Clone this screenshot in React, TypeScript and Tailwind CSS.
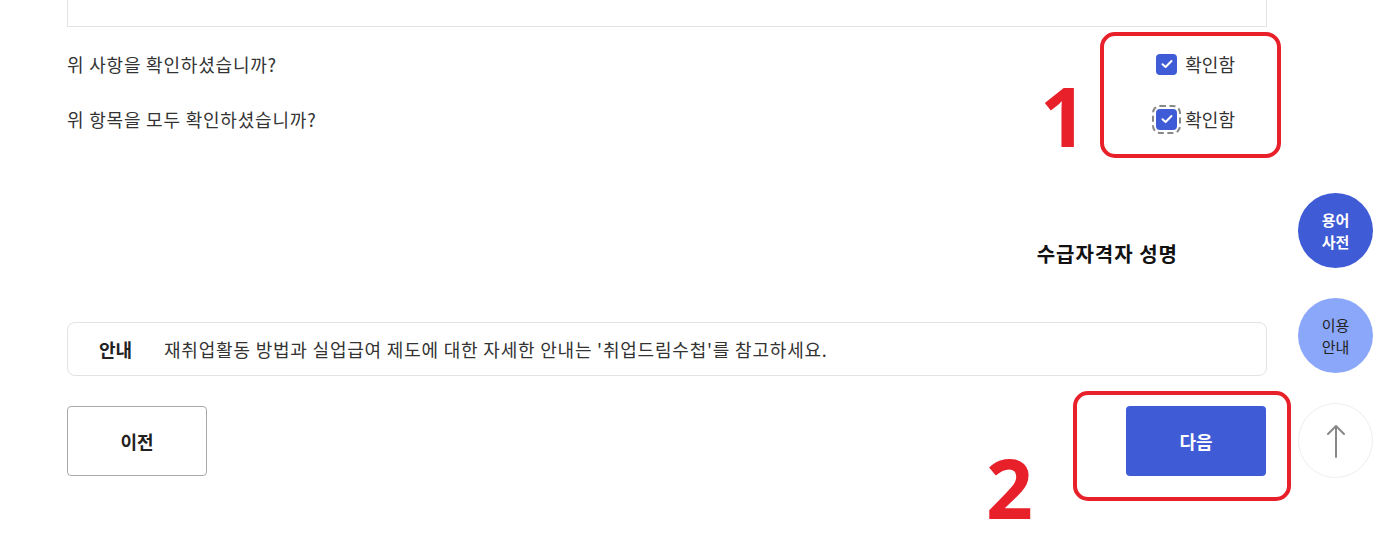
import React from "react";

function Check({ focus }: { focus?: boolean }) {
  return (
    <span className={"relative inline-flex items-center justify-center w-[21px] h-[21px] rounded-[4px] bg-[#3f5bd5] " + (focus ? "outline-2 outline-dashed outline-[#888] outline-offset-[2px]" : "")}>
      <svg width="12" height="10" viewBox="0 0 12 10" fill="none">
        <path d="M1.5 5.2 L4.6 8 L10.5 2" stroke="white" strokeWidth="2" strokeLinecap="round" strokeLinejoin="round" />
      </svg>
    </span>
  );
}

export default function App() {
  const font = { fontFamily: '"Noto Sans CJK KR", "Noto Sans", sans-serif' };
  return (
    <div className="relative w-[1388px] h-[548px] bg-white overflow-hidden text-[#333]" style={font}>
      <div className="ml-[67px] w-[1200px]">
        <div className="h-[27px] border-x border-b border-[#e3e3e3]" />
        <div className="flex items-center justify-between h-[74px]">
          <span className="text-[18px] tracking-[0.8px] text-[#333]">위 사항을 확인하셨습니까?</span>
          <label className="flex items-center gap-[8px] mr-[32px] text-[18px]">
            <Check />
            <span>확인함</span>
          </label>
        </div>
        <div className="flex items-center justify-between h-[36px]">
          <span className="text-[18px] tracking-[0.8px] text-[#333]">위 항목을 모두 확인하셨습니까?</span>
          <label className="flex items-center gap-[8px] mr-[32px] text-[18px]">
            <Check focus />
            <span>확인함</span>
          </label>
        </div>
        <div className="flex justify-end pr-[89px] pt-[102px]">
          <span className="text-[20px] tracking-[1px] font-bold text-[#111]">수급자격자 성명</span>
        </div>
        <div className="mt-[53px] h-[54px] flex items-center border border-[#e3e3e3] rounded-[8px] px-[31px] text-[18px]">
          <span className="font-bold text-[#222] w-[65px]">안내</span>
          <span className="text-[#333] tracking-[0.8px]">재취업활동 방법과 실업급여 제도에 대한 자세한 안내는 '취업드림수첩'를 참고하세요.</span>
        </div>
        <div className="mt-[30px] flex justify-between">
          <button className="w-[140px] h-[70px] border border-[#a8a8a8] rounded-[4px] bg-white text-[18px] font-bold text-[#222]">이전</button>
          <button className="w-[140px] h-[70px] mr-[1px] rounded-[4px] bg-[#3f5bd5] text-[18px] font-bold text-white">다음</button>
        </div>
      </div>

      {/* floating side buttons */}
      <div className="absolute left-[1298px] top-[193px] flex flex-col gap-[30px]">
        <div className="w-[75px] h-[75px] rounded-full bg-[#3f5bd5] flex flex-col items-center justify-center text-center text-white font-bold text-[15px] leading-[22px]">
          <span>용어</span>
          <span>사전</span>
        </div>
        <div className="w-[75px] h-[75px] rounded-full bg-[#8ba7f9] flex flex-col items-center justify-center text-center text-[#222] text-[15px] leading-[22px]">
          <span>이용</span>
          <span>안내</span>
        </div>
        <div className="w-[75px] h-[75px] rounded-full bg-white border border-[#eee] flex items-center justify-center">
          <svg width="20" height="36" viewBox="0 0 20 36" fill="none">
            <path d="M10 34 V3 M2 11 L10 3 L18 11" stroke="#888" strokeWidth="2" strokeLinecap="round" strokeLinejoin="round" />
          </svg>
        </div>
      </div>

      {/* annotations */}
      <div className="absolute left-[1100px] top-[32px] w-[181px] h-[126px] border-[4px] border-[#e8202a] rounded-[15px]" />
      <div className="absolute left-[1040px] top-[74px] text-[#e8202a] font-bold text-[82px] leading-none" style={{ fontFamily: '"Noto Sans", sans-serif' }}>1</div>
      <div className="absolute left-[1073px] top-[391px] w-[218px] h-[110px] border-[4px] border-[#e8202a] rounded-[15px]" />
      <div className="absolute left-[986px] top-[446px] text-[#e8202a] font-bold text-[82px] leading-none" style={{ fontFamily: '"Noto Sans", sans-serif' }}>2</div>
    </div>
  );
}
